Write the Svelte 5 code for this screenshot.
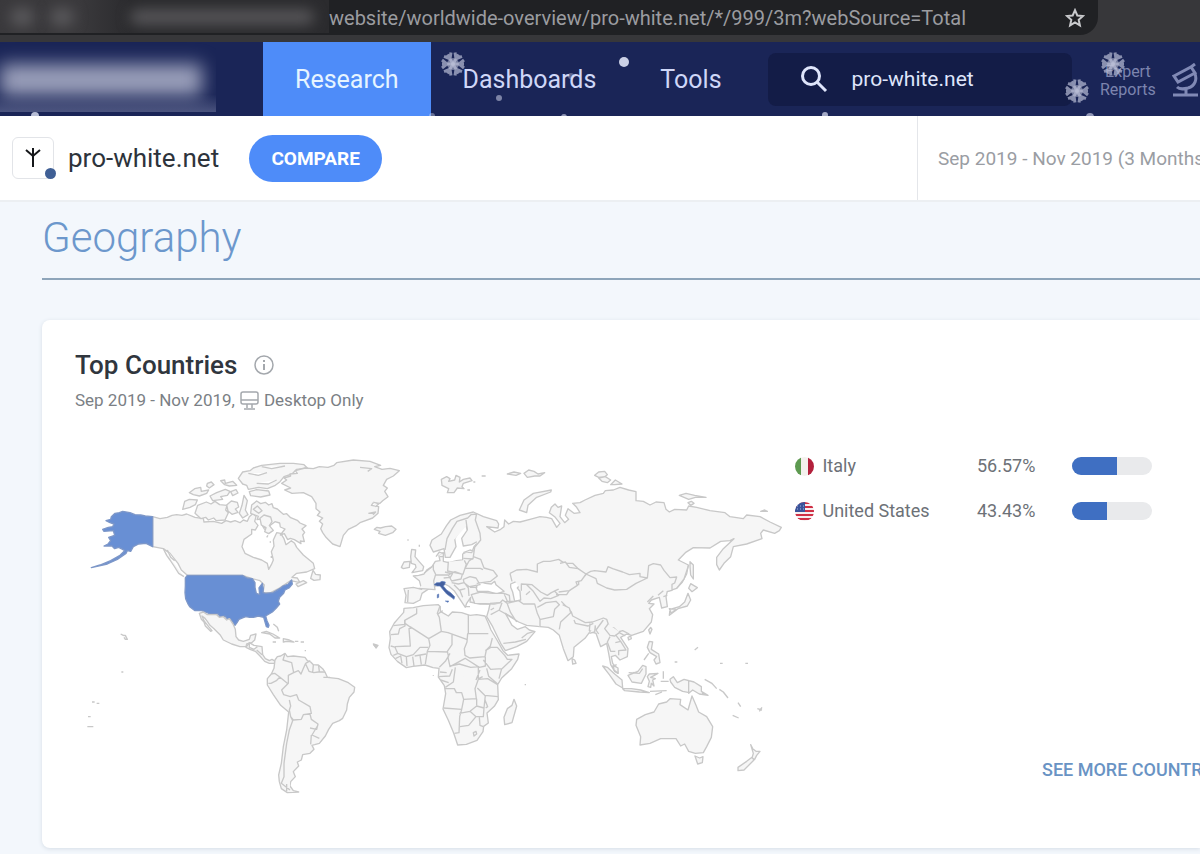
<script>
  let url = 'website/worldwide-overview/pro-white.net/*/999/3m?webSource=Total'
  let query = 'pro-white.net'

  const tabs = [
    { label: 'Research', active: true },
    { label: 'Dashboards', active: false },
    { label: 'Tools', active: false }
  ]

  const countries = [
    { code: 'it', name: 'Italy', share: 56.57 },
    { code: 'us', name: 'United States', share: 43.43 }
  ]

  const flakes = [
    { x: 453, y: 22 },
    { x: 1113, y: 22 },
    { x: 1077, y: 49 }
  ]

  const dots = [
    { x: 624, y: 20, r: 5, o: 0.9 },
    { x: 499, y: 56, r: 3, o: 0.5 },
    { x: 571, y: 34, r: 3, o: 0.35 },
    { x: 35, y: 74, r: 4, o: 0.8 },
    { x: 432, y: 74, r: 3, o: 0.4 },
    { x: 564, y: 75, r: 3, o: 0.6 },
    { x: 825, y: 73, r: 3, o: 0.7 },
    { x: 1090, y: 75, r: 4, o: 0.6 }
  ]
</script>

<div class="browser">
  <div class="address">
    <div class="smudge" aria-hidden="true"><i></i><i></i><i class="host"></i></div>
    <input class="url" aria-label="Address" bind:value={url} />
    <button class="star" aria-label="Bookmark">
      <svg width="20" height="20" viewBox="0 0 20 20">
        <path d="M10 2.2l2.3 5.3 5.6.5-4.2 3.8 1.2 5.6-4.9-2.9-4.9 2.9 1.2-5.6L2.1 8l5.6-.5z" fill="none" stroke="#c9cacd" stroke-width="2" />
      </svg>
    </button>
  </div>
</div>

<header>
  <div class="logo" aria-hidden="true"><i></i></div>
  <nav>
    {#each tabs as tab}
      <a href="#top" class:active={tab.active}>{tab.label}</a>
    {/each}
  </nav>
  <label class="search">
    <svg width="28" height="28" viewBox="0 0 28 28" fill="none" stroke="#dfe5fb" stroke-width="3">
      <circle cx="11" cy="11" r="8.5" />
      <path d="M17 17l9 9" />
    </svg>
    <input aria-label="Search website" bind:value={query} />
  </label>
  <a class="expert" href="#reports">
    <span>Expert<br />Reports</span>
    <svg width="32" height="36" viewBox="0 0 32 36" fill="none" stroke="#8089b5" stroke-width="3">
      <path d="M2 13L19 4l4 6L6 19zM19 4l4-3M22 9c4 7 1 14-6 16M5 24c3 3 7 2 11 1M14 25v7M1 32h25" />
    </svg>
  </a>
  <svg class="snow" aria-hidden="true">
    {#each flakes as f}
      <g transform="translate({f.x} {f.y})">
        <circle r="6" opacity="0.45" />
        {#each [0, 60, 120] as a}
          <path transform="rotate({a})" d="M-11 0H11M-11 -4L-6 0L-11 4M11 -4L6 0L11 4" />
        {/each}
      </g>
    {/each}
    {#each dots as d}
      <circle cx={d.x} cy={d.y} r={d.r} opacity={d.o} />
    {/each}
  </svg>
</header>

<div class="site">
  <div class="favicon">
    <svg width="18" height="22" viewBox="0 0 18 22" fill="none" stroke="#15171a" stroke-width="2">
      <path d="M9 1v19M2 3l7 6 7-6" />
    </svg>
    <span class="badge"></span>
  </div>
  <span class="domain">pro-white.net</span>
  <button class="compare">COMPARE</button>
  <div class="period">Sep 2019 - Nov 2019 (3 Months)</div>
</div>

<main>
  <h1>Geography</h1>
  <section class="card">
    <h2>
      Top Countries
      <svg width="20" height="20" viewBox="0 0 20 20" fill="none" stroke="#a4a8ad">
        <circle cx="10" cy="10" r="9" stroke-width="1.5" />
        <path d="M10 5v2M10 9v6" stroke-width="2" />
      </svg>
    </h2>
    <p class="sub">
      Sep 2019 - Nov 2019,
      <svg width="19" height="19" viewBox="0 0 19 19" fill="none" stroke="#a4a8ad" stroke-width="1.5">
        <rect x="1" y="1" width="17" height="12" rx="2" />
        <path d="M1 9h17M7 13v4M12 13v4M4 18h11" />
      </svg>
      Desktop Only
    </p>

    <div class="body">
      <!-- map units are a third of a pixel -->
      <svg class="map" viewBox="0 0 2130 1050" role="img" aria-label="World map of top countries">
        <!-- North America -->
        <g>
          <path d="M218 200L240 206 262 202 276 196 290 194 306 196 320 192 345 202 370 206 372 216 400 214 425 220 438 212 452 216 465 212 480 218 490 210 502 214 508 200 520 190 528 200 524 214 534 226 526 240 515 238 515 252 492 268 486 290 495 310 520 322 545 330 562 340 566 358 574 344 580 330 574 305 582 288 580 270 590 248 602 250 612 266 618 284 634 272 644 280 650 292 670 315 700 340 704 356 680 366 650 370 636 382 652 384 660 398 632 392 598 414 572 428 549 428 553 405 540 392 516 386 488 376 322 376 304 360 294 340 270 310 250 296 218 290z" />
          <path d="M695 375l4-14 8 12 14 2-1 14-18 2-10-6zM648 402l22-10 10 6-26 12z" />
          <path d="M512 190l3-25 15-12 12 8 14-4 10 8 10-4 4 12 12 4 18 16 10-2 12 12 20 8 8 8 18 8-12 10 8 10-6 8 5 20-12-2 2 8-20-12-12-4-8 4-10-18-12 4 14-18-14-6-2-12-14-4-16 12-2 18-14-8-6-10 8-14-12-6-12 2 4-10z" />
          <path d="M345 190l8-24 26-10 14 6 12-8 14 10 22 2-4 14 8 8-10 22-26 2-8-8-16 6-8-8-14 4zM308 178l6-24 14-6 24 2-6 14-16 8zM440 165l14-12 18 4 4 14-10 6 8 10-18 6-12-10zM478 190l8-24 6-30 10 16-6 28 8 14-16 10zM382 100l12-4 8 8-14 10-8-6zM328 128l16-12 18-4 2 12 22-4-6 10-22 8-18-4zM390 138l20-10 26-10 14 6-8 12-20 4 6 8-30 4zM422 92l12-2 2 10 22-6 12 12-22 2-14-4zM452 125l16-6 6 10-16 8zM508 125l22-6 36 4 4 12-28 6-30-4zM540 205l12-10 20 6 4 14-8 12 12 14-14 10-12-6 4-12-14-8zM520 178l12-10 14 14-10 8z" />
          <path d="M475 85L488 66 510 62 520 54 545 46 600 40 640 40 672 44 682 54 650 58 636 72 612 80 600 95 586 106 562 116 536 112 505 118 500 106 488 102zM505 70l30 6 26-8M530 100l35 2 25-12M545 50l30 6 40-8" />
          <path d="M250 296l10 20 10 14 12 18 14 22 16 10M262 300l10 22 12 10M574 318v6M560 262l4-6M571 274v4M550 232h6" />
        </g>
        <g class="usa">
          <path d="M218 200L196 198 182 195 165 194 150 188 128 184 118 188 105 190 94 200 92 208 78 212 90 218 102 222 98 230 85 232 68 238 72 244 100 242 104 256 86 262 92 272 84 282 72 288 96 288 104 296 116 292 128 298 134 302 120 316 92 332 60 345 34 353 82 342 112 328 138 310 142 302 152 304 160 290 176 282 198 280 218 290zM322 376h165l14 8 16 2 8 12 0 14 4 18 10 4-2-20 10-14 3 16-1 12 8 2 22-2 20-12 10-8 16-6 10-12 2 12-10 12-12 6-4 10-12 12-4 12 4 8-10 12-12 12-20 12 4 14 6 14-2 6-6-2-8-28-16-4-14 4-12 0-12-2-20 8-6 10-6 8-14-20-8 2-8-10-16 2-4-8-24 0-26-10-20 0-16-12-6-10-6-14-2-18 1-20 0-24z" />
        </g>
        <!-- Greenland and Iceland -->
        <g transform="translate(540)">
          <path d="M65 100L80 90 72 84 92 78 90 72 112 70 106 62 135 54 160 56 178 50 204 52 222 46 230 38 280 30 330 34 362 46 344 50 366 58 390 55 418 62 400 78 380 88 370 106 382 114 374 124 384 140 368 152 360 160 340 158 334 166 356 170 354 190 338 204 300 218 290 226 265 238 250 256 240 290 218 282 198 262 188 248 182 236 188 222 178 214 188 204 172 196 180 186 168 176 168 160 155 140 130 128 96 130 74 120 92 114z" />
          <path d="M343 238l8-6 10 2 16-4 18-2 13 10-10 10-22 8-20-6 4-6zM300 52l35 4-12 8M340 156l16 6-10 8M325 190l22-4-8 8" />
        </g>
        <!-- Central and South America -->
        <g transform="translate(0 450)">
          <path d="M358 40l12-4 12 8h28l8 8 12-2 10 10 8-4 12 18 6 14 2 22 8 10 14 4 18-6 4-12 16-4-4 18-9 8-15 4-2 8-18 0-25-8-25-12-10-16-18-18-12-10-8-12-8-10-8-6 6 14 14 18 10 12-4 2-16-16-4-12-8-8z" />
          <path d="M498 142l10-14 14 8 24 4 2 24 8 12 12 6 8-4 10 6-4 6-14 0-14-6-14-16-14-14-16-6zM508 128v14l14 6 10-8M530 150l16 14M556 176l10 4M545 98l14-4 20 8 20 12-14 0-16-12zM578 126h10M610 116l18 4 14 6-22-2-10 2zM645 124h10M662 126h10M676 150v4M580 72l12 10 4 12" />
          <path d="M585 180L592 170 602 168 615 160 622 170 640 168 675 172 682 182 692 186 700 194 715 195 728 206 736 218 742 232 775 236 805 248 824 262 822 276 808 292 802 312 800 330 788 355 778 362 758 370 746 388 736 408 718 430 704 434 696 436 702 448 690 460 668 464 664 480 652 486 656 498 640 515 646 530 632 545 630 558 640 572 656 576 622 578 604 566 598 545 596 525 604 490 610 440 620 390 626 336 602 316 580 284 562 255 562 236 574 222 582 205z" />
          <path d="M615 160l-6 20 26 8 6 30-16 8 0 24-20 20 6 14 20 6M641 218l14-6 8 10 6-14 8-18 14-8M677 192l10 22 14 4 14-2 20 0M700 195l-2 22M716 197l2 18M574 222l10-2 16 12 22 18M565 250l8 0 16-8 10-10M630 290l20-6 6 16 34 20 4 20-24 4-6 14-24 2-8-10-4-20 4-12-4-18M670 344l20-2 4 16 20 14-4 16-20-4M714 375l-18 30 22 10M694 405l-2 28M632 350l6 12-10 28-8 40-8 60 0 40-8 20 26 20M620 552v22M730 232h20" />
          <path d="M122 102l8 4 6 0 6 12-6 0-4-6M880 132l14 4-6 8zM124 216h6M36 306h8M50 310h8M24 350h8M22 380h18" />
        </g>
        <!-- Eurasia -->
        <path d="M975 458L978 436 972 416 1000 412 1025 418 1018 392 1000 378 1016 376 1032 372 1040 360 1056 350 1066 334 1080 332 1076 314 1090 308 1090 334 1106 338 1130 332 1148 330 1148 312 1160 306 1175 308 1182 290 1200 270 1175 284 1150 288 1145 265 1162 240 1155 215 1142 238 1124 266 1128 290 1110 322 1096 322 1092 296 1060 306 1050 286 1056 270 1084 252 1100 226 1112 210 1140 196 1180 186 1210 200 1250 212 1256 222 1254 234 1220 230 1244 246 1262 238 1272 230 1274 210 1286 222 1300 214 1320 216 1350 208 1380 200 1400 202 1415 206 1430 232 1440 220 1424 200 1408 188 1414 172 1425 162 1434 172 1445 168 1440 200 1454 218 1466 208 1456 196 1464 176 1482 190 1500 188 1490 172 1478 160 1500 158 1515 150 1545 136 1570 130 1576 122 1600 120 1620 112 1646 120 1668 125 1668 152 1690 154 1710 165 1728 156 1752 158 1758 178 1768 186 1784 178 1820 180 1826 168 1850 172 1890 182 1935 188 1950 200 1990 206 2000 195 2040 200 2070 216 2104 232 2098 242 2084 250 2050 240 2042 250 2046 266 2000 282 1960 290 1952 320 1932 340 1918 360 1910 344 1910 322 1930 296 1962 266 1950 272 1922 274 1890 294 1840 293 1816 308 1795 330 1825 345 1820 372 1806 398 1790 415 1762 424 1758 440 1762 470 1745 474 1738 442 1714 450 1706 460 1722 462 1708 476 1718 494 1714 516 1690 544 1655 556 1640 552 1622 562 1644 596 1642 620 1620 630 1606 616 1594 620 1598 640 1612 656 1614 670 1604 664 1592 644 1586 610 1580 580 1562 590 1548 550 1530 545 1515 565 1482 592 1480 620 1464 632 1450 596 1438 556 1420 540 1405 532 1380 530 1340 526 1316 516 1290 500 1276 490 1296 526 1312 538 1336 530 1348 540 1365 545 1340 574 1310 590 1276 602 1262 580 1238 530 1220 500 1226 480 1230 462 1200 462 1170 456 1172 442 1160 460 1156 472 1140 448 1124 424 1106 408 1090 400 1062 410 1044 418 1026 430 1020 450 1000 460z" />
        <path class="sea" d="M1188 412l12-18 16 6 18 2 10-8 4 10 24 20-22 8-26-8-32 0zM1292 402l18-8 12 8-10 12 8 10 2 26-18 4-6-28-6-14z" />
        <g transform="translate(900)">
          <path d="M95 298l12 2-2 20 12 14 14 16-3 12-32 6 12-16-2-8-12-4-2-20zM64 352l8-16 18-2-2 18-18 4zM118 284v6M82 270h4" />
          <path d="M195 300l6-34 16-30 14-22 32-10 10-10 18-2M262 240l-4-30M290 190l-4 20 14 40 2 20-18 22-4 28 22 8 10 26 28 8 12 16-20 16-42 6M250 308l20-8 12 4M250 325l30 2M205 335l-2 28 46 10 10-30-6-12M255 355l12-22 14-10M255 355l46 0 8 4M160 345l0 14 8 16 36 0M156 350l-24 20M195 366l22 6-6 10-20 2M115 415l50 4-4-26 6-20M85 420l-2 36M205 375l20-10 22 8-4 14-28 6zM250 388l20-8 18 4 12 20-32 6-16-12zM215 398l20 4 18-4 12 16 2 24M222 404l18 18 8 20M240 420l16-4M270 412h22M274 434l28-8 36 4 34 0 10 24-40 8-58-2zM168 320l10-14 10 4M180 320h12M418 180l14-30 28-20 54-10-2 6-42 16-26 24-4 22zM184 88l16-8 10 6-4 8 18-4 4-14 12 6-2 14 12-8 20-4 6 8-26 8-4 10 6 6-20-2-10 14-20 0 4-12-20-10zM262 120h8M280 96h6M305 78h12M382 72l20-6 20 4-14 6zM432 70l14-10 16 4 12 8 20-4-14 10-16 0-22 4z" />
          <path d="M390 370l20-10 30-2 32 8 0-24 18-8 20 0 26-6 18 12 24 0 32 32 10 0-24 22 0 10-22 4-8 10-32 0-20 10-12 8-20-10-26-22-32-2 0 20M440 404l20 20 20 30 12-10 20 2 24-10-12-12M540 412l30 6-10 16-32 0M450 424l-12 10M372 430l16 6 2 20M380 454l20 0 26 6M390 370l6 24" />
        </g>
        <g transform="translate(1440)">
          <path d="M0 340l16-4 12 16 26 4 24 16-14 20-16 4 4 10-24 16-32 4M78 372l14-8 12-2 34 4 6-16 14 6 30 10 20 8 32-4 0 10 22 4-34 16-28 18-36 2-24-6-28-14-4-14zM262 385l4-38 14-6 22 4 10 16 18 22 20-2-6 18-8 4 0 18-16 4M294 436l16-14M4 454l30 32 4 12 38 20 22-2 32-12 10 4 8 24 14 2 12 12 14-4 20 10M42 510l4 10 38 8 16-8M106 530l-4 16-14-4 2-22M130 510l-22 30 8 12M262 456l18-18M310 440l12-4M350 415l22-28 14-42" />
          <path d="M104 76l12-10 18-2 8 10-8 6-18 2zM116 84l20-4 16 10-10 8-16-4zM152 104l14-14 20 12-22 2zM358 136l20-6 26 6 34 6-32 0-20 6zM384 158l10-4 8 6-10 6zM602 184l12-4 8 4zM390 335l10 10 0 42-8-12-2-26zM386 415l6-14 20 12-16 12zM384 430l8 20-10 18-28 8-26 20 2-18 28-8 16-14zM328 476l20 2-14 12zM266 540l6-8 4 6-6 14z" />
        </g>
        <!-- Africa and the Middle East -->
        <g transform="translate(870 330)">
          <path d="M102 145l28-2 30-6 45-3 6 6 0 14 24 14 12-12 28 2 25 8 20-2 25 4 10 22 8 20 18 30 18 32 14 14 34-4-4 16-18 28-30 28-12 20 2 45-12 20-22 20 4 30-14 10-2 16-18 26-32 12-26 2-12-36-16-38-16-34 8-46-4-24-18-26 2-26-18-2-24-8-36 4-20 4-26-18-20-22-6-20 4-28-2-20 14-26 12-14 16-18z" />
          <path d="M140 145l0 16-36 20 0 12-34 4M105 182l0 16-16 8-4 16-22 2M105 190l20 14-8 2 4 52-46 2M120 200l56 36 38-22-6-42-6-12 8-22M204 162l14-10M214 214l20 4 56 20M295 165v56h60M293 220l-2 26-8 20 2 20 14 8 46-4 4-20 12-12 6-24M246 224l0 30-14 20 4 18M176 236l4 20-8 18 62 2M172 274l-6 38M240 280l-14 24-18 18M234 292l6 28 44-24M240 318l28-6 34 10 26-2M284 294l44 28 18-4 0-28M346 272l16-10 20 0 22 24 8 12 14 0-30 28-34 2-22-28M350 325l6 24 28 24M395 326l-8 30M256 322l-6 44-24 16M225 386l28 0 6 12 16 0 6 20 38-2-4-30 10-28 0-36M325 358l28-2 30 18M322 384l22 22 40 4M221 444l54 4 6-30M275 448l-6 22-2 48-14 2M268 460l32-6 18 16-22 26-26 4M300 454l20-16 22 6-2 26-22 0M342 444l4-38M320 416l0 20M330 330l-12 30M205 350l34-2 8-20M210 336l20 2M212 360l24 8M338 350l-12 6M75 262l8 18 26 10 2 28M84 280l-14 6M76 296l16-8 4 22M110 290l20-6 20-22 24 0M128 290l4 28M150 286l4 28M134 288l34-6M62 258l16 4M310 518l8-4 2 8-8 6zM340 500l-10-4-2-24M345 420l8 20-6 4" />
          <path d="M432 418l8 20-14 50-22 6-2-22 10-26 14-10zM606 296l8 4 4 10-10 2zM12 256h8l-2 6zM190 346v2M466 372v4" />
          <path d="M410 130l36-8 14 10 34 0 8 28 8 18 0 22M412 132l10 26 18 28M360 130l30-2 8-8 14 10M396 128l-8 22-26 14M362 150l10-6M386 150l44 24M400 250l36-4 32-8M455 234l18-14 20-6M502 142l26-14 30-4 10 10-14 14-4 22-38 8M578 134l20 10 4 14-30 28-4 22M288 140h12" />
        </g>
        <!-- South-east Asia and Oceania -->
        <g transform="translate(1440 450)">
          <path d="M240 435l2-25-14-34 2-18 26-14 26-8 14-24 24-6 10-10 32 2-2 16 24 16 12-42 12 28 8 20 24 14 18 30-4 32-14 28-10 18-24 2-20-6-12-22-12 6-14-22-46 0-32 14zM405 468l14 6 10-4-2 18-14 4zM572 434l6 12 10 8 12 0-10 12-6 12-8-4 4-14zM576 472l6 8-30 30-18 2 0-10 26-18z" />
          <path d="M128 198l14 4 22 20 22 18 2 24-20-12-20-28zM188 266l26 0 28 4 26 8-30-2-44-4zM270 274l50-2M286 284l20-8M160 196l14 8 0 16-12-10zM204 226l30-12 14-18 10 4 0 22-14 28-28-4zM206 218l32 2 10-14M262 230l6-8 26-2-22 12 14 4-8 4 4 18-8-8-2 12-8-2 4-16zM310 214v22M302 244h24M330 238l10-8 12 18 20-10 30 8 22 14 0 14 20 12-26-4-20-12-10 8-20-4-24-12-12-16zM386 240v42M426 280l16 6M434 238l22 12 14 16M478 268l12 8 14 18M534 308l8 12M518 346l18 8M592 326l14 4M598 334l8-12M268 124l10 2-4 22 22 14 4 26-12 4-6-12 8-10-20-12-8-16zM252 180l14-20M204 112l8-4 2 8-8 4zM404 150l10-8M344 186h8M480 190h8M556 190h8" />
          <path d="M106 76l-2 20-16 4M144 72l-10 14 16 20 14 2 14-10 18 10M150 110l-8 16 10 28 14 0M166 128l16-4 16 26-22 2 0 14M182 124l-16-20M156 200l14-6" />
        </g>
        <path class="italy" d="M1062 404l8-6 8 0 8-4 10 2-2 8-4 4 10 12 12 8 12 12-2 8-8-6-14-10-12-14-8-10-8 0zM1072 434l4-2 0 10-4 2zM1096 453l10 0-2 4z" />
      </svg>

      <div class="side">
        <table>
          <tbody>
            {#each countries as c}
              <tr>
                <th scope="row">
                  <svg class="flag" width="19" height="19" viewBox="0 0 19 19">
                    <clipPath id="clip-{c.code}"><circle cx="9.5" cy="9.5" r="9.5" /></clipPath>
                    <g clip-path="url(#clip-{c.code})">
                      {#if c.code === 'it'}
                        <path d="M0 0h19v19H0z" fill="#f4f1ee" />
                        <path d="M0 0h6v19H0z" fill="#5d9a50" />
                        <path d="M13 0h6v19h-6z" fill="#b3203c" />
                      {:else}
                        <path d="M0 0h19v19H0z" fill="#f6eef0" />
                        <path d="M0 1h19M0 5h19M0 9h19M0 13h19M0 17h19" stroke="#cf2f45" stroke-width="2" />
                        <path d="M0 0h10v10H0z" fill="#39539b" />
                        <path d="M2 4h7M2 7h7" stroke="#a9b9de" stroke-dasharray="1 2" />
                      {/if}
                    </g>
                  </svg>
                  {c.name}
                </th>
                <td class="share">{c.share}%</td>
                <td><div class="bar"><div class="fill" style="width: {c.share}%"></div></div></td>
              </tr>
            {/each}
          </tbody>
        </table>
        <a class="more" href="#countries">SEE MORE COUNTRIES</a>
      </div>
    </div>
  </section>
</main>

<style>
  :global(body) {
    margin: 0;
    overflow-x: hidden;
    background: #f3f7fc;
    font-family: Roboto, "Liberation Sans", sans-serif;
  }
  button,
  input {
    font-family: inherit;
    border: 0;
    padding: 0;
    background: none;
  }
  a {
    text-decoration: none;
  }
  .browser {
    height: 42px;
    background: #37373a;
  }
  .address {
    display: flex;
    align-items: center;
    box-sizing: border-box;
    height: 35px;
    margin-right: 102px;
    padding-right: 13px;
    border-radius: 0 0 18px 0;
    background: #202124;
  }
  .smudge {
    display: flex;
    align-items: center;
    align-self: flex-start;
    gap: 16px;
    box-sizing: border-box;
    width: 329px;
    height: 33px;
    padding-left: 10px;
    overflow: hidden;
    background: linear-gradient(90deg, #3a393c 0 80px, #2b2b2e 130px);
  }
  .smudge i {
    width: 24px;
    height: 18px;
    border-radius: 9px;
    background: #5b5a5d;
    filter: blur(7px);
  }
  .smudge .host {
    width: 184px;
    height: 14px;
    margin-left: 40px;
  }
  .url {
    flex: 1;
    color: #9b9ca0;
    font-size: 20px;
  }
  .star {
    display: flex;
  }
  header {
    position: relative;
    display: flex;
    align-items: center;
    height: 74px;
    overflow: hidden;
    background: #1a2557;
  }
  .logo {
    flex: none;
    align-self: flex-start;
    box-sizing: border-box;
    width: 216px;
    height: 70px;
    margin-right: 47px;
    padding-top: 22px;
    overflow: hidden;
    background: linear-gradient(#1a2557 75%, #4a537e);
  }
  .logo i {
    display: block;
    width: 202px;
    height: 32px;
    background: #9a9fba;
    filter: blur(9px);
  }
  nav {
    display: flex;
    height: 100%;
  }
  nav a {
    display: flex;
    align-items: center;
    padding: 0 32px;
    color: #cfd7f8;
    font-size: 25px;
  }
  nav a.active {
    background: #4e8cf9;
    color: #e6f4ff;
  }
  .search {
    flex: 1;
    display: flex;
    align-items: center;
    gap: 24px;
    box-sizing: border-box;
    min-width: 0;
    height: 53px;
    margin-left: 14px;
    padding-left: 32px;
    border-radius: 8px;
    background: #131c47;
  }
  .search input {
    min-width: 0;
    flex: 1;
    color: #dfe5fb;
    font-size: 21px;
  }
  .expert {
    flex: none;
    display: flex;
    align-items: center;
    gap: 16px;
    width: 100px;
    margin-left: 28px;
    padding-top: 4px;
    color: #7c84ae;
    font-size: 16px;
    line-height: 18px;
    text-align: center;
  }
  .expert svg {
    flex: none;
  }
  .snow {
    position: absolute;
    inset: 0;
    width: 100%;
    height: 100%;
    pointer-events: none;
    fill: #dfe3f5;
  }
  .snow path {
    fill: none;
    stroke: #b9bed6;
    stroke-width: 3;
    opacity: 0.7;
  }
  .site {
    display: flex;
    align-items: center;
    height: 84px;
    padding-left: 12px;
    border-bottom: 2px solid #eceff2;
    background: #fff;
  }
  .favicon {
    position: relative;
    display: flex;
    align-items: center;
    justify-content: center;
    box-sizing: border-box;
    width: 42px;
    height: 42px;
    border: 1px solid #e2e4e8;
    border-radius: 6px;
  }
  .badge {
    position: absolute;
    right: -3px;
    bottom: -1px;
    width: 11px;
    height: 11px;
    border-radius: 50%;
    background: #3f5f95;
  }
  .domain {
    margin: 0 30px 0 14px;
    color: #2d333b;
    font-size: 26px;
  }
  .compare {
    width: 133px;
    height: 47px;
    border-radius: 24px;
    background: #4e8cf9;
    color: #fff;
    font-size: 19px;
    font-weight: 700;
  }
  .period {
    display: flex;
    align-items: center;
    box-sizing: border-box;
    flex: none;
    width: 283px;
    height: 100%;
    margin-left: auto;
    padding-left: 20px;
    border-left: 1px solid #e4e6ea;
    color: #9a9da3;
    font-size: 19px;
    white-space: nowrap;
    overflow: hidden;
  }
  main {
    padding: 8px 0 6px 42px;
  }
  h1 {
    margin: 0 0 40px;
    padding-bottom: 12px;
    border-bottom: 2px solid #8ea5ba;
    color: #6c97cc;
    font-size: 42px;
    font-weight: 300;
    line-height: 56px;
  }
  .card {
    padding: 29px 0 48px 33px;
    border-radius: 8px 0 0 8px;
    background: #fff;
    box-shadow: 0 1px 4px #d5dde6;
    overflow: hidden;
  }
  h2 {
    display: flex;
    align-items: center;
    gap: 17px;
    margin: 0;
    color: #30363e;
    font-size: 26px;
    font-weight: 500;
    line-height: 32px;
  }
  .sub {
    display: flex;
    align-items: center;
    gap: 5px;
    margin: 7px 0 0;
    color: #7b7f85;
    font-size: 17px;
    line-height: 24px;
  }
  .body {
    display: flex;
    gap: 5px;
    padding: 31px 0 0 5px;
  }
  .map {
    flex: none;
    width: 710px;
    height: 350px;
    margin-top: 7px;
    fill: #f6f6f6;
    stroke: #c8c8c8;
    stroke-width: 4;
    stroke-linejoin: round;
  }
  .map .sea {
    fill: #fff;
  }
  .map .usa {
    fill: #688fd4;
    stroke: #7d97c8;
  }
  .map .italy {
    fill: #44609f;
    stroke: #5f80c0;
    stroke-width: 2;
  }
  .side {
    display: flex;
    flex-direction: column;
    justify-content: space-between;
    padding: 0 0 18px;
  }
  table {
    width: 357px;
    table-layout: fixed;
    border-collapse: collapse;
    color: #6d7177;
    font-size: 18px;
  }
  tr {
    height: 45px;
  }
  th {
    width: 182px;
    padding: 0;
    font-weight: 400;
    text-align: left;
  }
  td {
    padding: 0;
  }
  .share {
    width: 95px;
  }
  .flag {
    margin-right: 4px;
    vertical-align: middle;
  }
  .bar {
    height: 18px;
    border-radius: 9px;
    background: #e9eaec;
    overflow: hidden;
  }
  .fill {
    height: 100%;
    background: #3f6fc2;
  }
  .more {
    margin-left: 247px;
    color: #6993c4;
    font-size: 18px;
    font-weight: 500;
    line-height: 24px;
    white-space: nowrap;
  }
</style>
